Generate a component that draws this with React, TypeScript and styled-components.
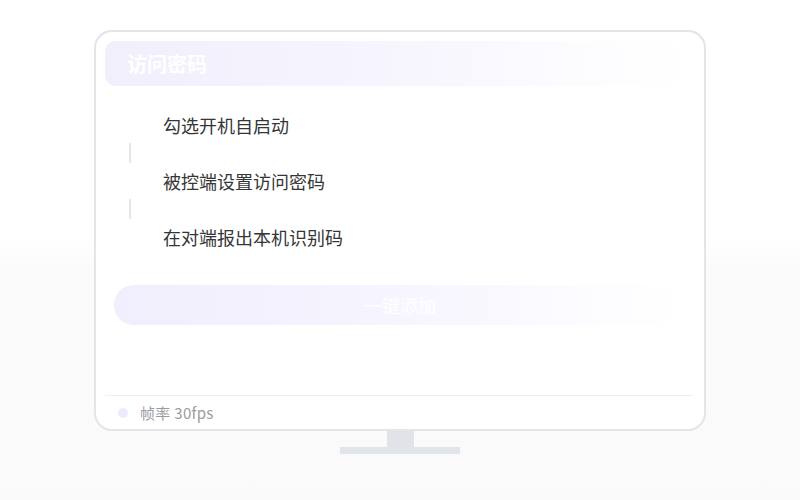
import styled, { createGlobalStyle } from "styled-components";

const GlobalStyle = createGlobalStyle`
  html, body {
    margin: 0;
    padding: 0;
    height: 100%;
  }
  body {
    font-family: 'Noto Sans CJK SC', 'Noto Sans', sans-serif;
    background: linear-gradient(180deg, #ffffff 0%, #ffffff 47%, #fbfbfc 53%, #fafafb 100%);
  }
  #root {
    height: 100%;
  }
`

const Page = styled.div`
  height: 500px;
  display: flex;
  flex-direction: column;
  align-items: center;
  padding-top: 30px;
  box-sizing: border-box;
`

const Screen = styled.div`
  width: 612px;
  height: 401px;
  box-sizing: border-box;
  border: 2px solid #e3e5e9;
  border-radius: 18px;
  background: #ffffff;
  display: flex;
  flex-direction: column;
  padding: 9px 8px 0 9px;
`

const Header = styled.div`
  height: 45px;
  border-radius: 10px;
  background: linear-gradient(90deg, #f2effd 0%, #f6f4fe 45%, #fdfdff 85%, #ffffff 100%);
  display: flex;
  align-items: center;
  padding-left: 22px;
  color: #ffffff;
  font-size: 20px;
  font-weight: 700;
`

const Steps = styled.div`
  margin-top: 27px;
  padding-left: 16px;
  display: flex;
  flex-direction: column;
`

const StepRow = styled.div`
  display: flex;
  align-items: center;
  height: 24px;
`

const Marker = styled.div`
  width: 18px;
  flex-shrink: 0;
`

const StepText = styled.span`
  margin-left: 24px;
  font-size: 18px;
  color: #363636;
  line-height: 24px;
`

const Connector = styled.div`
  width: 18px;
  height: 32px;
  display: flex;
  justify-content: center;
  align-items: center;

  &::before {
    content: "";
    width: 2px;
    height: 20px;
    background: #e4e6ea;
  }
`

const AddButton = styled.button`
  margin: 36px 0 0 9px;
  width: 572px;
  height: 40px;
  border: none;
  border-radius: 20px;
  background: linear-gradient(90deg, #f1eefd 0%, #f5f3fe 40%, #fbfaff 75%, #ffffff 100%);
  color: #ffffff;
  font-family: 'Noto Sans CJK SC', sans-serif;
  font-size: 18px;
  padding: 0;
  cursor: pointer;
`

const Spacer = styled.div`
  flex: 1;
`

const Footer = styled.div`
  margin: 0 3px 0 0;
  height: 33px;
  border-top: 1px solid #eceef2;
  display: flex;
  align-items: center;
  padding-left: 13px;
  gap: 12px;
`

const Dot = styled.span`
  width: 10px;
  height: 10px;
  border-radius: 50%;
  background: #eeeafc;
`

const FooterText = styled.span`
  font-size: 15px;
  color: #9a9ca3;
  letter-spacing: 0.3px;
`

const Neck = styled.div`
  width: 27px;
  height: 16px;
  background: #e0e3e7;
`

const Base = styled.div`
  width: 120px;
  height: 7px;
  background: #e1e4e8;
`

const steps = ["勾选开机自启动", "被控端设置访问密码", "在对端报出本机识别码"]

const App = () => {
  return (
    <>
      <GlobalStyle />
      <Page>
        <Screen>
          <Header>访问密码</Header>
          <Steps>
            {steps.map((s, i) => (
              <div key={s}>
                {i > 0 && <Connector />}
                <StepRow>
                  <Marker />
                  <StepText>{s}</StepText>
                </StepRow>
              </div>
            ))}
          </Steps>
          <AddButton>一键添加</AddButton>
          <Spacer />
          <Footer>
            <Dot />
            <FooterText>帧率 30fps</FooterText>
          </Footer>
        </Screen>
        <Neck />
        <Base />
      </Page>
    </>
  )
}

export default App;
